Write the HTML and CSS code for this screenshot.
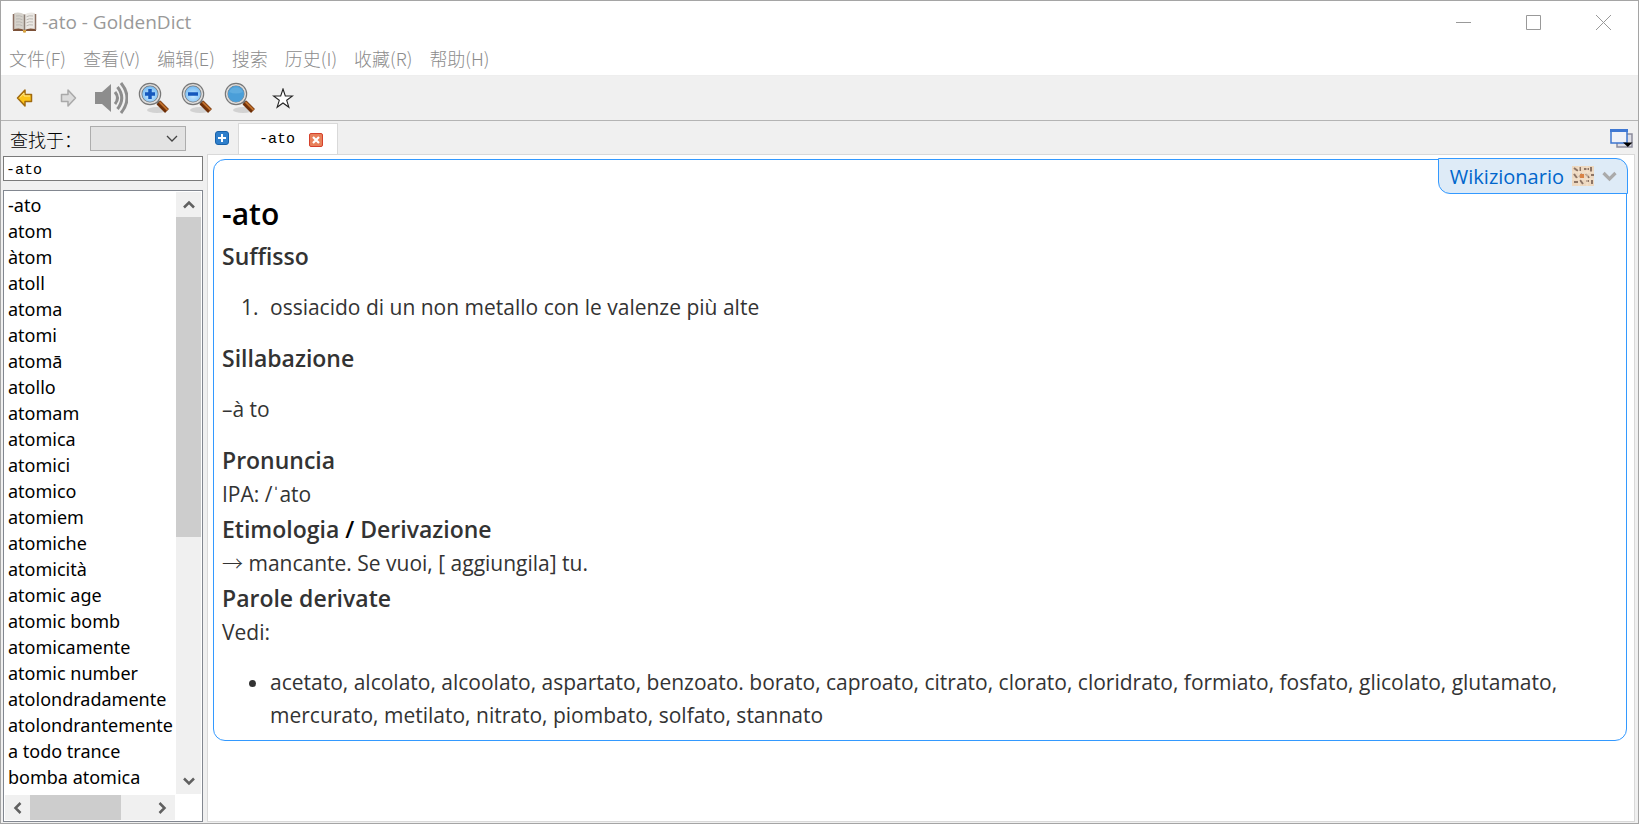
FILE: index.html
```html
<!DOCTYPE html>
<html lang="zh-CN">
<head>
<meta charset="utf-8">
<title>-ato - GoldenDict</title>
<link rel="stylesheet" href="styles.css">
</head>
<body>
<div class="window">
  <header class="titlebar">
    <svg class="app-icon" width="25" height="21" viewBox="0 0 25 21">
      <path d="M1 2h10l1.500 1.500L14 2h10v17H14l-1.500 1.500L11 19H1z" fill="#7c5138"/>
      <path d="M2 1q6-1.500 10.500 1.500V18Q8 15.500 2 17z" fill="#d6d2cb"/>
      <path d="M23 1q-6-1.500-10.500 1.500V18Q17 15.500 23 17z" fill="#ebe8e4"/>
      <path d="M4 4q4-.800 6.500.800M4 7q4-.800 6.500.800M4 10q4-.800 6.500.800M4 13q4-.800 6.500.800M21 4q-4-.800-6.500.800M21 7q-4-.800-6.500.800M21 10q-4-.800-6.500.800M21 13q-4-.800-6.500.800" fill="none" stroke="#bbb8b3"/>
      <path d="M12.500 2.500V18" stroke="#8b7f76" stroke-width="1.500"/>
      <path d="M1.500 2v16M23.500 2v16" stroke="#8b6f62" stroke-width="1.500"/>
      <path d="M11 18h3v2.500h-3z" fill="#d9a441"/>
    </svg>
    <h1 class="title">-ato - GoldenDict</h1>
    <div class="caption-buttons">
      <button aria-label="最小化"><svg width="17" height="17" viewBox="0 0 17 17"><path d="M1 8.500h15"/></svg></button>
      <button aria-label="最大化"><svg width="17" height="17" viewBox="0 0 17 17"><path d="M1.500 1.500h14v14h-14z"/></svg></button>
      <button aria-label="关闭"><svg width="17" height="17" viewBox="0 0 17 17"><path d="M1 1l15 15M16 1L1 16"/></svg></button>
    </div>
  </header>
  <nav class="menubar">
    <button>文件(F)</button><button>查看(V)</button><button>编辑(E)</button><button>搜索</button><button>历史(I)</button><button>收藏(R)</button><button>帮助(H)</button>
  </nav>
  <div class="toolbar">
    <button class="tool arrow" aria-label="后退"><svg width="18" height="20" viewBox="0 0 18 20"><path d="M1.500 10L9 2v4.500h6.500v7H9V18z" fill="#fcc419" stroke="#a06a10" stroke-width="1.500" stroke-linejoin="round"/><path d="M4 9.500L8 5v3h6" fill="none" stroke="#ffe78a"/></svg></button>
    <button class="tool arrow" aria-label="前进"><svg width="18" height="20" viewBox="0 0 18 20"><path d="M16.500 10L9 2v4.500H2.500v7H9V18z" fill="#dcdcdc" stroke="#a9a9a9" stroke-width="1.500" stroke-linejoin="round"/></svg></button>
    <button class="tool" aria-label="发音"><svg width="34" height="32" viewBox="0 0 34 32"><path d="M1 10h7l9-8v28l-9-8H1z" fill="#8d8d8d"/><path d="M21 10q5 6 0 12M23.500 5q8.500 11 0 22M27 1q12 15 0 30" fill="none" stroke="#8d8d8d" stroke-width="3"/></svg></button>
    <button class="tool" aria-label="放大"><svg width="32" height="32" viewBox="0 0 32 32"><use href="#lens"/><path d="M12 7v10M7 12h10" stroke="#1558bd" stroke-width="3.500"/></svg></button>
    <button class="tool" aria-label="缩小"><svg width="32" height="32" viewBox="0 0 32 32"><use href="#lens"/><path d="M7 12h10" stroke="#1558bd" stroke-width="3.500"/></svg></button>
    <button class="tool" aria-label="正常大小"><svg width="32" height="32" viewBox="0 0 32 32"><use href="#lens"/><circle cx="12" cy="12" r="8" fill="#4a9ed8"/><path d="M5 10a7.500 7.500 0 0 1 14 0q-7 3-14 0z" fill="#5facdf"/></svg></button>
    <button class="tool" aria-label="收藏"><svg width="22" height="21" viewBox="0 0 22 21"><path d="M11 1l2.300 7h7.200l-5.800 4.300 2.200 7-5.900-4.300-5.900 4.300 2.200-7L1.500 8h7.200z" fill="#fff" stroke="#222" stroke-width="1.100"/></svg></button>
  </div>
  <svg class="defs" width="0" height="0">
    <defs>
      <radialGradient id="glass" cx="50%" cy="60%" r="55%"><stop offset="0" stop-color="#c9e9ff"/><stop offset="1" stop-color="#6fb7f2"/></radialGradient>
      <g id="lens">
        <ellipse cx="19" cy="28" rx="10" ry="3" fill="#c4c4c4" opacity=".7"/>
        <path d="M18 18l3 3" stroke="#777" stroke-width="4"/>
        <path d="M20.500 20.500l8.500 8.500" stroke="#6f3008" stroke-width="5.500"/>
        <path d="M21.500 20l8 8" stroke="#c0702c" stroke-width="1.800"/>
        <circle cx="12" cy="12" r="9.500" fill="url(#glass)" stroke="#777" stroke-width="3.500"/>
        <circle cx="12" cy="12" r="9.300" fill="none" stroke="#ddd" stroke-width="1.600"/>
      </g>
    </defs>
  </svg>
  <div class="body">
    <aside class="sidebar">
      <div class="lookup">
        <label for="group">查找于：</label>
        <div class="combo"><select id="group"><option></option></select><svg width="12" height="8" viewBox="0 0 12 8"><path d="M1 1l5 5 5-5" fill="none" stroke="#444" stroke-width="1.300"/></svg></div>
      </div>
      <input class="query" type="text" value="-ato" aria-label="查找">
      <div class="listbox">
        <ul class="words">
          <li>-ato</li><li>atom</li><li>àtom</li><li>atoll</li><li>atoma</li><li>atomi</li><li>atomā</li><li>atollo</li><li>atomam</li><li>atomica</li><li>atomici</li><li>atomico</li><li>atomiem</li><li>atomiche</li><li>atomicità</li><li>atomic age</li><li>atomic bomb</li><li>atomicamente</li><li>atomic number</li><li>atolondradamente</li><li>atolondrantemente</li><li>a todo trance</li><li>bomba atomica</li>
        </ul>
        <div class="vbar">
          <button aria-label="向上"><svg width="12" height="9" viewBox="0 0 12 9"><path d="M1 7.500l5-5 5 5"/></svg></button>
          <div class="vtrack"><div class="vthumb"></div></div>
          <button aria-label="向下"><svg width="12" height="9" viewBox="0 0 12 9"><path d="M1 1.500l5 5 5-5"/></svg></button>
        </div>
        <div class="hbar">
          <button aria-label="向左"><svg width="9" height="12" viewBox="0 0 9 12"><path d="M7.500 1l-5 5 5 5"/></svg></button>
          <div class="htrack"><div class="hthumb"></div></div>
          <button aria-label="向右"><svg width="9" height="12" viewBox="0 0 9 12"><path d="M1.500 1l5 5-5 5"/></svg></button>
        </div>
      </div>
    </aside>
    <main class="content">
      <div class="tabs">
        <button class="newtab" aria-label="新标签页"><svg width="14" height="14" viewBox="0 0 14 14"><rect x=".5" y=".5" width="13" height="13" rx="2.500" fill="#2f7fcb" stroke="#1861a8"/><path d="M7 3v8M3 7h8" stroke="#fff" stroke-width="2"/></svg></button>
        <div class="tab"><span>-ato</span><button aria-label="关闭标签页"><svg width="14" height="14" viewBox="0 0 14 14"><rect x=".5" y=".5" width="13" height="13" rx="1.500" fill="#e8805a" stroke="#d5412c"/><path d="M4 4l6 6M10 4l-6 6" stroke="#fff" stroke-width="2.200"/></svg></button></div>
        <button class="tablist" aria-label="标签页列表"><svg width="23" height="20" viewBox="0 0 23 20"><path d="M7 5h15v13H7z" fill="#dedee6" stroke="#8c8c9c" stroke-width="1.500"/><path d="M1 1h16v13H1z" fill="#f0f2f8" stroke="#3d76cf" stroke-width="1.500"/><path d="M0 0h18v3H0z" fill="#3f78d3"/><path d="M13 13.500h9.500L17.800 18z" fill="#000"/></svg></button>
      </div>
      <div class="page">
        <article class="article">
          <div class="dict">
            <a href="#entry">Wikizionario</a>
            <svg width="24" height="24" viewBox="0 0 24 24"><path d="M1 2h22v20H1z" fill="#edd8c0"/><path d="M3 4l4 3M9 3v4M13 5h5M20 3v5M3 10l3 4M8 13l3-3M15 10l3 4M20 11h3M3 18h4M9 16l3 4M15 17h3M21 16v4" stroke="#8d7566" stroke-width="2"/><path d="M1 8h22M1 15h22M8 2v20M16 2v20" stroke="#f5e3cd"/><path d="M9 10h4v4H9z" fill="#d98345"/></svg>
            <button aria-label="折叠"><svg width="15" height="11" viewBox="0 0 15 11"><path d="M1.500 2l6 6 6-6" fill="none" stroke="#aaa" stroke-width="3.200"/></svg></button>
          </div>
          <h2 id="entry">-ato</h2>
          <h3>Suffisso</h3>
          <ol><li>ossiacido di un non metallo con le valenze più alte</li></ol>
          <h3>Sillabazione</h3>
          <p class="spaced">–à to</p>
          <h3>Pronuncia</h3>
          <p>IPA: /ˈato</p>
          <h3>Etimologia <span class="slash">/</span> Derivazione</h3>
          <p><span class="mark">→</span> mancante. Se vuoi, [ aggiungila] tu.</p>
          <h3>Parole derivate</h3>
          <p>Vedi:</p>
          <ul><li>acetato, alcolato, alcoolato, aspartato, benzoato. borato, caproato, citrato, clorato, cloridrato, formiato, fosfato, glicolato, glutamato, mercurato, metilato, nitrato, piombato, solfato, stannato</li></ul>
        </article>
      </div>
    </main>
  </div>
</div>
</body>
</html>
```
FILE: styles.css
```css
* { box-sizing: border-box; }
body { margin: 0; font-family: "Open Sans", "Noto Sans CJK SC", sans-serif; }
button { border: 0; padding: 0; background: none; color: inherit; font: inherit; display: flex; align-items: center; justify-content: center; }
svg { display: block; flex: none; }
.defs { position: absolute; }

.window { min-height: 100vh; display: flex; flex-direction: column; background: #f0f0f0; border: 1px solid #a5a5a5; }
.titlebar { display: flex; align-items: center; height: 42px; padding-left: 11px; background: #fff; }
.title { flex: 1; margin: 0 0 0 5px; font-size: 19px; font-weight: 400; color: #999; }
.caption-buttons { display: flex; }
.caption-buttons button { width: 70px; height: 42px; }
.caption-buttons path { fill: none; stroke: #999; }
.menubar { display: flex; gap: 17px; height: 33px; padding: 0 8px 2px; background: #fff; border-bottom: 1px solid #eee; color: #8c8c8c; font: 300 18px "Noto Sans CJK SC", sans-serif; }
.toolbar { display: flex; align-items: center; gap: 11px; height: 45px; padding-left: 8px; border-bottom: 1px solid #b4b4b4; }
.tool { width: 32px; height: 36px; }

.body { flex: 1; display: flex; gap: 4px; padding: 0 3px 1px 2px; }
.sidebar { width: 200px; display: flex; flex-direction: column; }
.lookup { display: flex; align-items: center; height: 35px; padding: 0 17px 0 7px; font: 300 18px "Noto Sans CJK SC", sans-serif; }
.lookup label { width: 80px; white-space: nowrap; line-height: 24px; }
.combo { flex: 1; display: flex; align-items: center; height: 25px; border: 1px solid #adadad; background: #e3e3e3; padding-right: 7px; }
.combo select { appearance: none; flex: 1; min-width: 0; height: 100%; border: 0; background: none; }
.query { width: 100%; height: 25px; margin-bottom: 9px; padding: 3px 2px 0; border: 1px solid #7a7a7a; background: #fff; color: #000; font: 15px "Liberation Mono", monospace; }
.listbox { flex: 1; display: grid; grid-template-columns: 1fr 25px; grid-template-rows: 1fr 25px; gap: 1px; padding: 1px; border: 1px solid #828790; background: #fff; }
.words { margin: 0; padding: 0 0 0 3px; list-style: none; overflow: hidden; min-width: 0; font-family: "Noto Sans", sans-serif; font-size: 18px; line-height: 26px; color: #000; white-space: nowrap; }
.vbar, .hbar { display: flex; background: #f0f0f0; }
.vbar { flex-direction: column; }
.vbar button, .hbar button { width: 25px; height: 25px; }
.vbar path, .hbar path { fill: none; stroke: #606060; stroke-width: 2.500px; }
.vtrack, .htrack { flex: 1; display: flex; }
.vtrack { flex-direction: column; }
.vthumb { height: 58%; background: #cdcdcd; }
.hthumb { width: 76%; background: #cdcdcd; }

.content { flex: 1; min-width: 0; display: flex; flex-direction: column; }
.tabs { display: flex; height: 33px; align-items: center; }
.newtab { width: 31px; padding: 1px 2px 0 0; }
.tab { align-self: flex-end; display: flex; align-items: center; justify-content: space-between; width: 100px; height: 31px; padding: 1px 14px 0 20px; border: 1px solid #d9d9d9; border-bottom: 0; background: #fff; font: 15px "Liberation Mono", monospace; }
.tablist { margin-left: auto; padding: 3px 2px 0 0; }
.page { flex: 1; padding: 4px 7px 0 5px; border: 1px solid #d9d9d9; background: #fff; }
.article { position: relative; padding: 34px 32px 8px 8px; border: 1px solid #3399ff; border-radius: 12px; color: #333; font-size: 21px; line-height: 33px; }
.article h2 { margin: 0 0 4px; font-size: 30px; line-height: 40px; font-weight: 600; color: #000; }
.article h3 { margin: 0; font-size: 23px; line-height: 36px; font-weight: 600; }
.article p { margin: 0; }
.article .spaced { margin: 17px 0 16px; }
.article ol { margin: 17px 0 16px; padding-left: 42px; }
.article ol li { padding-left: 6px; }
.article ul { margin: 17px 0 0; padding-left: 48px; }
.slash { color: #000; }
.mark { font-family: "Noto Sans CJK SC", sans-serif; font-weight: 300; line-height: 1; }
.dict { position: absolute; top: -2px; right: -2px; display: flex; align-items: center; gap: 7px; height: 36px; padding: 0 10px 0 11px; border: 1px solid #3399ff; border-radius: 0 12px 0 12px; background: #deebf7; font-size: 20px; }
.dict a { color: #0066cc; text-decoration: none; }
```
